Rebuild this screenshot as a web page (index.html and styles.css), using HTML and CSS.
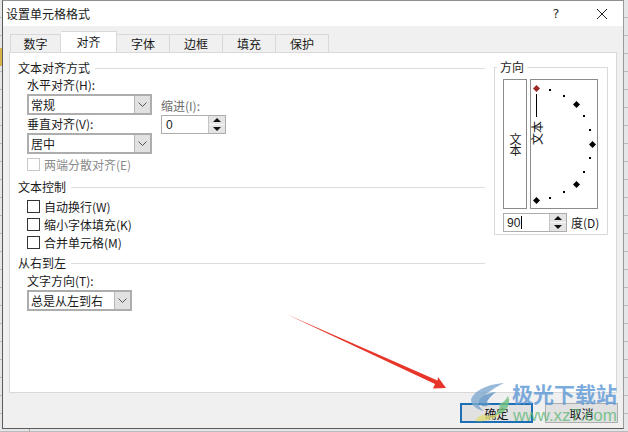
FILE: index.html
```html
<!DOCTYPE html>
<html lang="zh-CN">
<head>
  <meta charset="UTF-8" />
  <title>设置单元格格式</title>
  <link rel="stylesheet" href="styles.css">
</head>
<body>
  <div class="dialog">
    <div class="titlebar">
      <span class="title">设置单元格格式</span>
      <span class="help">?</span>
      <svg class="close" width="12" height="12" viewBox="0 0 12 12"><path d="M1 1L11 11M11 1L1 11" stroke="#222" stroke-width="1" fill="none"/></svg>
    </div>

    <div class="tabs">
      <div class="tab">数字</div>
      <div class="tab active">对齐</div>
      <div class="tab">字体</div>
      <div class="tab">边框</div>
      <div class="tab">填充</div>
      <div class="tab">保护</div>
    </div>

    <div class="panel">
      <div class="left">
        <div class="heading"><span>文本对齐方式</span></div>
        <div class="align-row">
          <div class="align-main">
            <div class="label">水平对齐(H):</div>
            <div class="select wide"><span>常规</span><i class="drop"><svg width="9" height="5" viewBox="0 0 9 5"><path d="M0.5 0.5L4.5 4.5L8.5 0.5" stroke="#555" fill="none"/></svg></i></div>
            <div class="label lower">垂直对齐(V):</div>
            <div class="select wide"><span>居中</span><i class="drop"><svg width="9" height="5" viewBox="0 0 9 5"><path d="M0.5 0.5L4.5 4.5L8.5 0.5" stroke="#555" fill="none"/></svg></i></div>
          </div>
          <div class="indent">
            <div class="label muted">缩进(I):</div>
            <div class="spin indent-spin">
              <span>0</span>
              <i class="spin-btn"><b class="up"></b><b class="down"></b></i>
            </div>
          </div>
        </div>
        <div class="check disabled"><i class="box"></i>两端分散对齐(E)</div>

        <div class="heading second"><span>文本控制</span></div>
        <div class="checks">
          <div class="check"><i class="box"></i>自动换行(W)</div>
          <div class="check"><i class="box"></i>缩小字体填充(K)</div>
          <div class="check"><i class="box"></i>合并单元格(M)</div>
        </div>

        <div class="heading third"><span>从右到左</span></div>
        <div class="label">文字方向(T):</div>
        <div class="select narrow"><span>总是从左到右</span><i class="drop"><svg width="9" height="5" viewBox="0 0 9 5"><path d="M0.5 0.5L4.5 4.5L8.5 0.5" stroke="#555" fill="none"/></svg></i></div>
      </div>

      <div class="direction">
        <span class="direction-title">方向</span>
        <div class="direction-boxes">
          <div class="vertical-text">文本</div>
          <svg class="dial" width="68" height="130" viewBox="530 79 68 130">
            <rect x="530.5" y="79.5" width="67" height="129" fill="#fff" stroke="#8c8c8c"/>
            <path d="M536.5 94V117" stroke="#000"/>
            <text x="536" y="133" transform="rotate(-90 536 133)" class="dial-text" text-anchor="middle" dominant-baseline="central">文本</text>
            <g fill="#000">
              <rect x="549" y="89" width="2" height="2"/>
              <rect x="563" y="95" width="2" height="2"/>
              <rect x="583" y="115" width="2" height="2"/>
              <rect x="589" y="129" width="2" height="2"/>
              <rect x="589" y="157" width="2" height="2"/>
              <rect x="583" y="171" width="2" height="2"/>
              <rect x="563" y="191" width="2" height="2"/>
              <rect x="549" y="197" width="2" height="2"/>
              <path d="M576.5 101L580 104.5L576.5 108L573 104.5Z"/>
              <path d="M592.5 141L596 144.5L592.5 148L589 144.5Z"/>
              <path d="M576.5 181L580 184.5L576.5 188L573 184.5Z"/>
              <path d="M536.5 197L540 200.5L536.5 204L533 200.5Z"/>
            </g>
            <path d="M536.5 85L540 88.5L536.5 92L533 88.5Z" fill="#9c2a2a"/>
          </svg>
        </div>
        <div class="degree-row">
          <div class="spin degree-spin">
            <span>90<u class="caret"></u></span>
            <i class="spin-btn"><b class="up"></b><b class="down"></b></i>
          </div>
          <div class="degree-label">度(D)</div>
        </div>
      </div>

      <svg class="arrow" width="170" height="80" viewBox="280 312 170 80">
        <path d="M285 315L436.5 381.5L437 378L445 389L432 389.5L434 385Z" fill="#e8352a"/>
      </svg>
    </div>

    <div class="buttons">
      <div class="btn default">确定</div>
      <div class="btn">取消</div>
    </div>

    <div class="watermark">
      <svg width="40" height="40" viewBox="0 0 40 40">
        <path d="M33 0C17 1 2 8 0 17C0 22 6 27 13 28C7 24 6 19 12 14C17 9 25 4 33 0Z" fill="#7fa9cf"/>
        <path d="M25 9C15 10 7 15 8 20C9 24 16 24 20 21C17 21 15 19 17 17C19 14 22 11 25 9Z" fill="#5d93c6"/>
        <path d="M37 13C41 22 34 31 23 33C28 28 30 24 28 21C32 20 35 17 37 13Z" fill="#6fc282"/>
        <path d="M4 38C12 39 23 37 30 30C24 33 16 33 11 32C8 33 6 35 4 38Z" fill="#e2dc74"/>
      </svg>
      <div class="mark-text">
        <div class="mark-cn">极光下载站</div>
        <div class="mark-en">www.xz7.com</div>
      </div>
    </div>
  </div>
</body>
</html>
```

FILE: styles.css
```css
html, body {
  margin: 0;
  height: 432px;
  overflow: hidden;
}

body {
  width: 628px;
  box-sizing: border-box;
  padding-left: 2px;
  font-family: "Noto Sans CJK SC", "Liberation Sans", sans-serif;
  font-size: 12px;
  color: #1a1a1a;
  background-color: #e4e6e8;
  background-image:
    linear-gradient(#d9b04a, #d9b04a),
    linear-gradient(#a8a8a8, #a8a8a8),
    repeating-linear-gradient(#e4e6e8 0, #e4e6e8 17px, #b9bcbf 17px, #b9bcbf 18px);
  background-size: 2px 18px, 1px 432px, 100% 100%;
  background-position: 0 48px, 29px 429px, 0 0;
  background-repeat: no-repeat;
}

.dialog {
  position: relative;
  width: 622px;
  height: 429px;
  box-sizing: border-box;
  background-color: #f0f0f0;
  border-left: 1px solid #5c5c5c;
  border-right: 1px solid #9a9a9a;
  border-bottom: 1px solid #5c5c5c;
  border-top: 1px solid #8f8f8f;
}

.titlebar {
  height: 25px;
  background-color: #fff;
  display: flex;
  align-items: center;
  padding-left: 3px;
}

.title {
  flex: 1;
  font-size: 12px;
}

.help {
  width: 12px;
  margin-right: 34px;
  font-family: "DejaVu Sans", sans-serif;
  font-size: 13px;
  color: #333;
  text-align: center;
}

.close {
  margin-right: 15px;
}

.tabs {
  display: flex;
  align-items: flex-end;
  height: 27px;
  padding-left: 7px;
  margin-bottom: -1px;
  position: relative;
}

.tab {
  width: 53px;
  height: 19px;
  box-sizing: border-box;
  border: 1px solid #d9d9d9;
  border-left: none;
  text-align: center;
  line-height: 18px;
  background-color: #f0f0f0;
}

.tab:first-child {
  width: 51px;
  border-left: 1px solid #d9d9d9;
}

.tab.active {
  width: 56px;
  height: 22px;
  line-height: 20px;
  background-color: #fff;
  border-bottom: none;
  border-left: none;
}

.panel {
  position: relative;
  width: 608px;
  height: 341px;
  margin-left: 6px;
  box-sizing: border-box;
  padding: 7px 8px 0 8px;
  background-color: #fff;
  border: 1px solid #d9d9d9;
  display: flex;
}

.left {
  width: 467px;
  margin-right: 9px;
}

.heading {
  height: 16px;
  line-height: 16px;
  display: flex;
  align-items: center;
}

.heading::after {
  content: "";
  flex: 1;
  height: 1px;
  margin-left: 5px;
  background-color: #dcdcdc;
}

.heading.second {
  margin-top: 6px;
}

.heading.third {
  margin-top: 4px;
  margin-bottom: 2px;
}

.label {
  height: 16px;
  line-height: 16px;
  margin-left: 9px;
}

.label.lower {
  margin-top: 1px;
}

.muted {
  margin-left: 0;
  color: #6d6d6d;
}

.align-row {
  display: flex;
  margin-top: 1px;
}

.align-main {
  width: 134px;
}

.indent {
  margin-left: 9px;
  padding-top: 21px;
}

.select {
  height: 21px;
  margin: 1px 0 0 9px;
  box-sizing: border-box;
  border: 2px solid #adadad;
  display: flex;
  align-items: center;
  background-color: #fff;
  padding-left: 2px;
}

.select span {
  flex: 1;
}

.wide {
  width: 125px;
}

.narrow {
  width: 105px;
}

.drop {
  width: 15px;
  height: 100%;
  background-color: #e1e1e1;
  border-left: 1px solid #b8b8b8;
  display: flex;
  align-items: center;
  justify-content: center;
}

.spin {
  height: 19px;
  box-sizing: border-box;
  border: 1px solid #adadad;
  display: flex;
  align-items: center;
  padding-left: 4px;
  background-color: #fff;
  font-family: "Liberation Sans", sans-serif;
}

.spin span {
  flex: 1;
}

.indent-spin {
  width: 65px;
  margin-top: 1px;
}

.spin-btn {
  width: 16px;
  height: 100%;
  display: flex;
  flex-direction: column;
  background-color: #e4e4e4;
  border-left: 1px solid #c4c4c4;
}

.spin-btn b {
  flex: 1;
  position: relative;
}

.spin-btn .up {
  border-bottom: 1px solid #f8f8f8;
}

.spin-btn b::after {
  content: "";
  position: absolute;
  left: 4px;
  top: 2px;
  border-left: 4px solid transparent;
  border-right: 4px solid transparent;
}

.spin-btn .up::after {
  border-bottom: 4px solid #111;
}

.spin-btn .down::after {
  border-top: 4px solid #111;
}

.check {
  height: 18px;
  display: flex;
  align-items: center;
  margin-left: 9px;
}

.box {
  width: 13px;
  height: 13px;
  box-sizing: border-box;
  border: 1px solid #333;
  margin-right: 4px;
  background-color: #fff;
}

.check.disabled {
  margin-top: 1px;
  color: #8a8a8a;
}

.check.disabled .box {
  border-color: #c8c8c8;
}

.checks {
  margin-top: 2px;
}

.direction {
  position: relative;
  width: 114px;
  height: 168px;
  margin-top: 7px;
  box-sizing: border-box;
  border: 1px solid #d9d9d9;
  padding: 11px 8px 0 8px;
}

.direction-title {
  position: absolute;
  top: -9px;
  left: 2px;
  padding: 0 3px;
  line-height: 16px;
  background-color: #fff;
}

.direction-boxes {
  display: flex;
  gap: 3px;
}

.vertical-text {
  width: 24px;
  height: 130px;
  box-sizing: border-box;
  border: 1px solid #8c8c8c;
  display: flex;
  align-items: center;
  justify-content: center;
  writing-mode: vertical-rl;
  text-orientation: upright;
  line-height: 12px;
  letter-spacing: -1px;
}

.dial-text {
  font-size: 12px;
  fill: #111;
}

.degree-row {
  display: flex;
  align-items: center;
  margin-top: 4px;
}

.degree-spin {
  width: 64px;
  flex-shrink: 0;
  padding-left: 3px;
}

.caret {
  display: inline-block;
  width: 1px;
  height: 13px;
  margin-left: 1px;
  background-color: #000;
  vertical-align: -2px;
}

.degree-label {
  margin-left: 4px;
  white-space: nowrap;
}

.arrow {
  position: absolute;
  left: 271px;
  top: 258px;
}

.buttons {
  display: flex;
  justify-content: flex-end;
  gap: 12px;
  padding: 10px 5px 0 0;
}

.btn {
  width: 73px;
  height: 20px;
  box-sizing: border-box;
  border: 1px solid #adadad;
  background-color: #e1e1e1;
  text-align: center;
  line-height: 19px;
  color: #111;
}

.btn.default {
  border: 2px solid #1c6fb4;
  line-height: 17px;
}

.watermark {
  position: absolute;
  left: 468px;
  top: 382px;
  display: flex;
  gap: 1px;
  opacity: 0.8;
}

.mark-text {
  width: 108px;
}

.mark-cn {
  height: 21px;
  font-size: 21px;
  line-height: 21px;
  font-weight: 700;
  color: #5c98d6;
  white-space: nowrap;
}

.mark-en {
  margin-top: 3px;
  margin-left: 1px;
  font-family: "Liberation Sans", sans-serif;
  font-size: 17px;
  line-height: 17px;
  color: #63b97b;
  white-space: nowrap;
}
```
